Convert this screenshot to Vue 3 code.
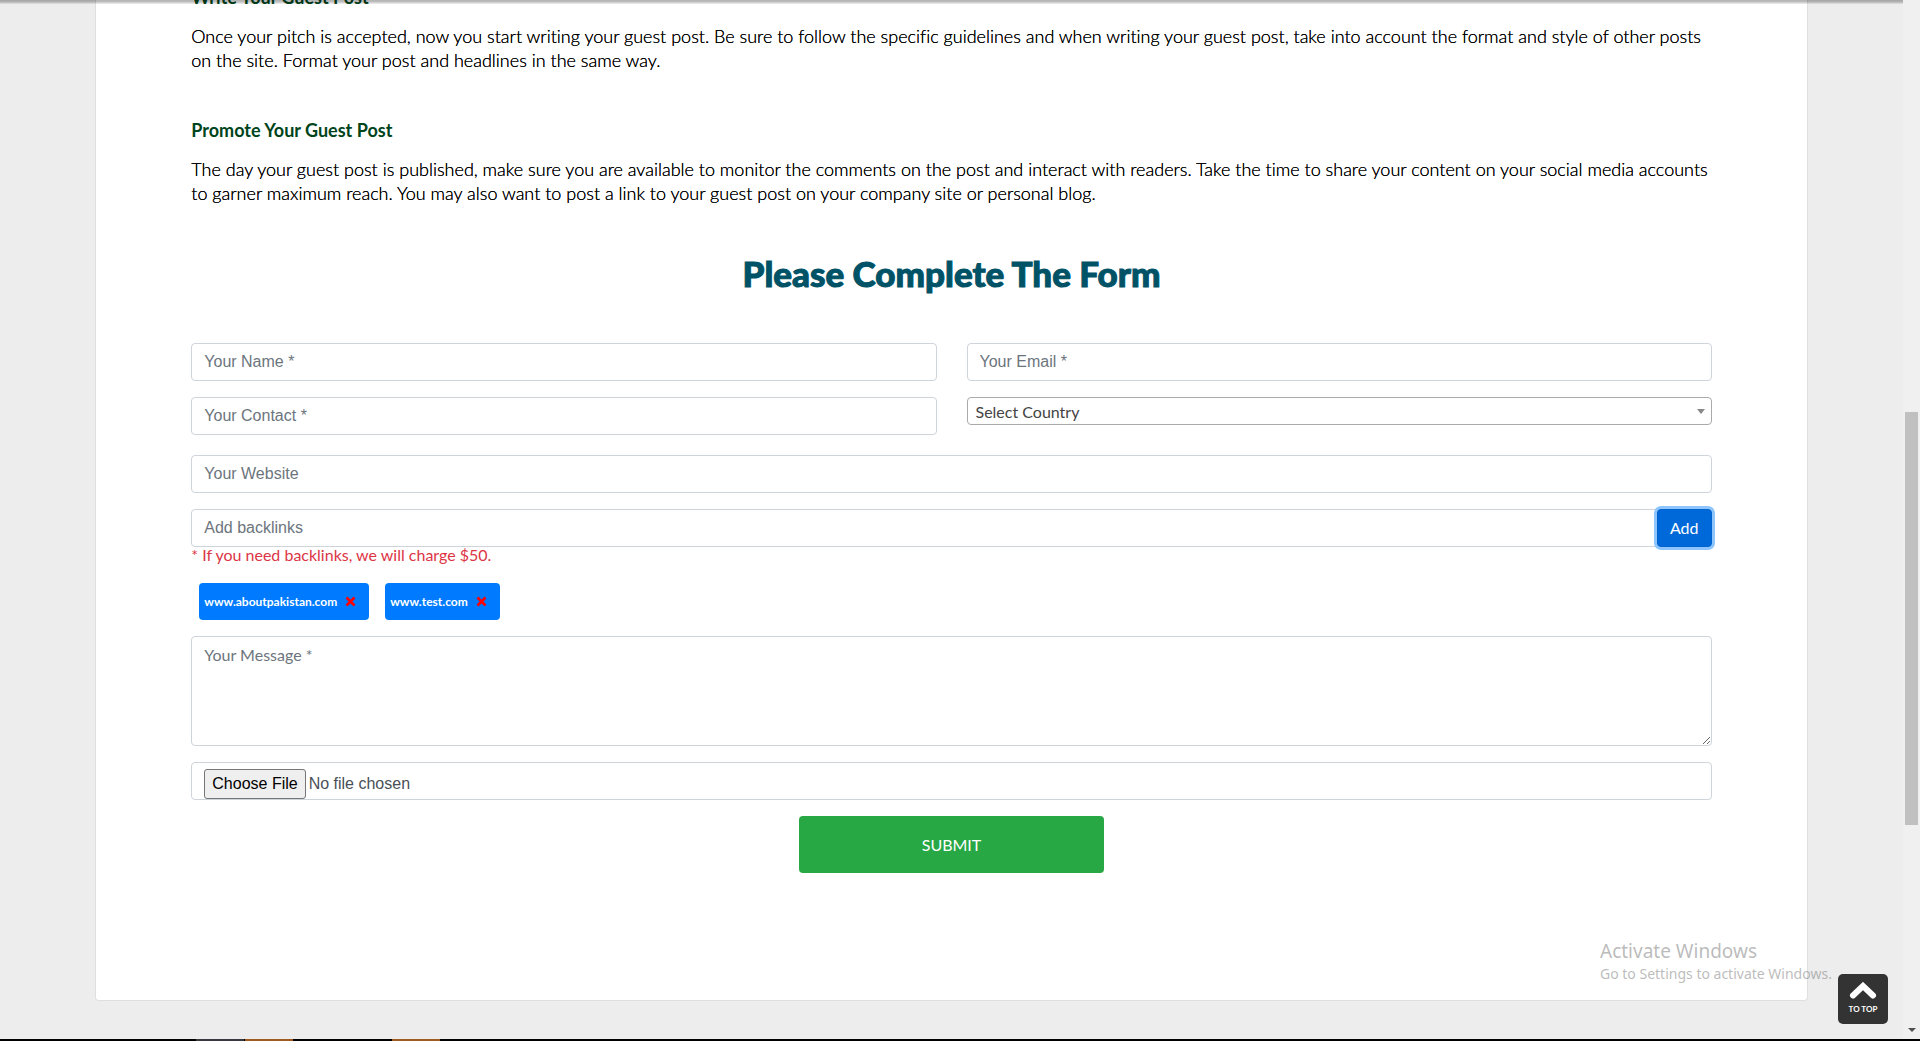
<script setup>
import { ref } from 'vue'

const links = ref(['www.aboutpakistan.com', 'www.test.com'])
const draft = ref('')

function addLink() {
  if (!draft.value.trim()) return
  links.value.push(draft.value.trim())
  draft.value = ''
}
</script>

<template>
  <div class="screen">
    <div class="window">
      <main class="page">
        <section class="card">
          <article class="guide">
            <h3>Write Your Guest Post</h3>
            <p>
              Once your pitch is accepted, now you start writing your guest post. Be sure to follow the specific
              guidelines and when writing your guest post, take into account the format and style of other posts
              on the site. Format your post and headlines in the same way.
            </p>
            <h3>Promote Your Guest Post</h3>
            <p>
              The day your guest post is published, make sure you are available to monitor the comments on the post
              and interact with readers. Take the time to share your content on your social media accounts
              to garner maximum reach. You may also want to post a link to your guest post on your company site or
              personal blog.
            </p>
          </article>

          <h2>Please Complete The Form</h2>

          <form @submit.prevent>
            <div class="pair">
              <input class="field" type="text" placeholder="Your Name *" aria-label="Your Name" />
              <input class="field" type="email" placeholder="Your Email *" aria-label="Your Email" />
              <input class="field" type="tel" placeholder="Your Contact *" aria-label="Your Contact" />
              <div class="country">
                <select aria-label="Select Country">
                  <option>Select Country</option>
                </select>
                <svg width="8" height="5" viewBox="0 0 8 5" aria-hidden="true"><path d="M0 0h8L4 5z" fill="#888" /></svg>
              </div>
            </div>
            <input class="field website" type="text" placeholder="Your Website" aria-label="Your Website" />
            <div class="backlinks">
              <input v-model="draft" class="field" type="text" placeholder="Add backlinks" aria-label="Add backlinks" />
              <button class="add" type="button" @click="addLink">Add</button>
            </div>
            <p class="note">* If you need backlinks, we will charge $50.</p>
            <ul class="chips">
              <li v-for="(link, i) in links" :key="link">
                {{ link }}
                <button type="button" :aria-label="'Remove ' + link" @click="links.splice(i, 1)">
                  <svg width="11" height="11" viewBox="0 0 11 11" aria-hidden="true">
                    <path d="M1.5 1.5l8 8M9.5 1.5l-8 8" stroke="#f00" stroke-width="2.6" />
                  </svg>
                </button>
              </li>
            </ul>
            <textarea class="field message" placeholder="Your Message *" aria-label="Your Message"></textarea>
            <input class="field file" type="file" aria-label="Choose File" />
            <button class="submit" type="submit">SUBMIT</button>
          </form>
        </section>
      </main>
      <div class="scrollbar" aria-hidden="true">
        <div class="thumb"></div>
        <svg width="8" height="4" viewBox="0 0 8 4"><path d="M0 0h8L4 4z" fill="#505050" /></svg>
      </div>
      <div class="watermark">
        <div class="big">Activate Windows</div>
        <div>Go to Settings to activate Windows.</div>
      </div>
      <a class="top" href="#app">
        <svg width="28" height="18" viewBox="0 0 28 18" aria-hidden="true">
          <path d="M4 13.5L14 4l10 9.5" fill="none" stroke="#fff" stroke-width="6" stroke-linecap="round" />
        </svg>
        <span>TO TOP</span>
      </a>
    </div>
    <div class="taskbar" aria-hidden="true"><i class="idle"></i><i></i><i class="far"></i></div>
  </div>
</template>

<style>
body {
  margin: 0;
  overflow: hidden;
}
</style>

<style scoped>
* {
  box-sizing: border-box;
}
.screen {
  display: flex;
  flex-direction: column;
  height: 100vh;
  background: #ededed;
  font-family: Lato, "Liberation Sans", sans-serif;
  font-size: 16px;
  font-variant-ligatures: none;
  color: #000;
}
.window {
  position: relative;
  display: flex;
  flex: 1;
  min-height: 0;
  overflow: hidden;
}
.window::before {
  content: "";
  position: absolute;
  inset: 0 17px auto 0;
  height: 4px;
  background: linear-gradient(rgba(0, 0, 0, 0.3), rgba(0, 0, 0, 0.26) 40%, rgba(0, 0, 0, 0.05));
}
.page {
  flex: 1;
  min-width: 0;
}
.card {
  margin: 0 5%;
  padding: 0 5% 127px;
  background: #fff;
  border: 1px solid #dfdfdf;
  border-top: 0;
  border-radius: 0 0 4px 4px;
}
.guide {
  display: flow-root;
}
.guide h3 {
  margin: 47px 0 16px;
  font-size: 18px;
  line-height: 22px;
  font-weight: 700;
  color: #00441b;
}
.guide h3:first-child {
  margin-top: -14px;
}
.guide p {
  margin: 0;
  font-size: 18px;
  line-height: 24px;
  font-weight: 300;
  text-shadow: 0 0 0 #000;
}
h2 {
  margin: 48px 0 50px;
  text-align: center;
  font-size: 35px;
  line-height: 40px;
  font-weight: 900;
  color: #005266;
  -webkit-text-stroke: 1px #005266;
}
form {
  display: flex;
  flex-direction: column;
}
.pair {
  display: grid;
  grid-template-columns: 1fr 1fr;
  gap: 16px 30px;
  align-items: start;
}
.field {
  width: 100%;
  height: 38px;
  padding: 6px 12px;
  border: 1px solid #ced4da;
  border-radius: 4px;
  background: #fff;
  font: 16px/24px "Liberation Sans", Arial, sans-serif;
  color: #495057;
}
.field::placeholder {
  color: #6c757d;
  opacity: 1;
}
.country {
  position: relative;
}
.country select {
  display: block;
  width: 100%;
  height: 28px;
  padding: 0 8px;
  appearance: none;
  border: 1px solid #aaa;
  border-radius: 4px;
  background: #fff;
  font: 16px Lato, sans-serif;
  color: #444;
}
.country svg {
  position: absolute;
  top: 12px;
  right: 7px;
}
.website {
  margin: 20px 0 16px;
}
.backlinks {
  display: flex;
}
.backlinks .field {
  flex: 1;
  border-radius: 4px 0 0 4px;
}
.add {
  width: 55px;
  height: 38px;
  border: 1px solid #0062cc;
  border-radius: 4px;
  background: #0069d9;
  box-shadow: 0 0 0 3px #8fc5ff;
  font: 16px/24px Lato, sans-serif;
  color: #fff;
}
.note {
  margin: 0;
  line-height: 16px;
  color: #dc3545;
}
.chips {
  display: flex;
  gap: 16px;
  margin: 20px 8px 16px;
  padding: 0;
  list-style: none;
}
.chips li {
  display: flex;
  align-items: center;
  gap: 8px;
  height: 37px;
  padding: 0 13px 0 5px;
  border-radius: 4px;
  background: #007bff;
  font-size: 12px;
  font-weight: 700;
  color: #fff;
}
.chips button {
  display: flex;
  padding: 0;
  border: 0;
  background: none;
}
.message {
  height: 110px;
  margin-bottom: 16px;
  font-family: Lato, sans-serif;
  resize: vertical;
}
.file {
  overflow: hidden;
}
.file::file-selector-button {
  height: 30px;
  margin-right: 3px;
  padding: 1px 7px;
  border: 1px solid #767676;
  border-radius: 3px;
  background: #efefef;
  font: inherit;
  color: #000;
}
.submit {
  align-self: center;
  width: 20%;
  height: 57px;
  margin-top: 16px;
  border: 0;
  border-radius: 4px;
  background: #28a745;
  font: 16px Lato, sans-serif;
  color: #fff;
}
.scrollbar {
  display: flex;
  flex-direction: column;
  align-items: center;
  justify-content: space-between;
  width: 17px;
  padding-bottom: 7px;
  background: #f0f0f0;
}
.thumb {
  width: 13px;
  height: 40%;
  margin-top: 412px;
  background: #c0c0c0;
}
.watermark {
  position: absolute;
  right: 85px;
  bottom: 55px;
  width: 235px;
  white-space: nowrap;
  font-family: "Noto Sans", "Open Sans", sans-serif;
  font-size: 14px;
  line-height: 20px;
  color: rgba(120, 120, 120, 0.5);
}
.watermark .big {
  font-size: 19px;
  line-height: 26px;
}
.top {
  position: absolute;
  right: 32px;
  bottom: 15px;
  display: flex;
  flex-direction: column;
  align-items: center;
  width: 50px;
  height: 50px;
  padding-top: 8px;
  border-radius: 5px;
  background: #333;
  font-size: 8px;
  line-height: 10px;
  font-weight: 700;
  color: #fff;
  text-decoration: none;
}
.top span {
  margin-top: 4px;
}
.taskbar {
  display: flex;
  gap: 1px;
  height: 2px;
  padding-left: 196px;
  background: #000;
}
.taskbar i {
  width: 48px;
  background: #a05a20;
}
.taskbar .idle {
  background: #38393f;
}
.taskbar .far {
  margin-left: 98px;
}
</style>
